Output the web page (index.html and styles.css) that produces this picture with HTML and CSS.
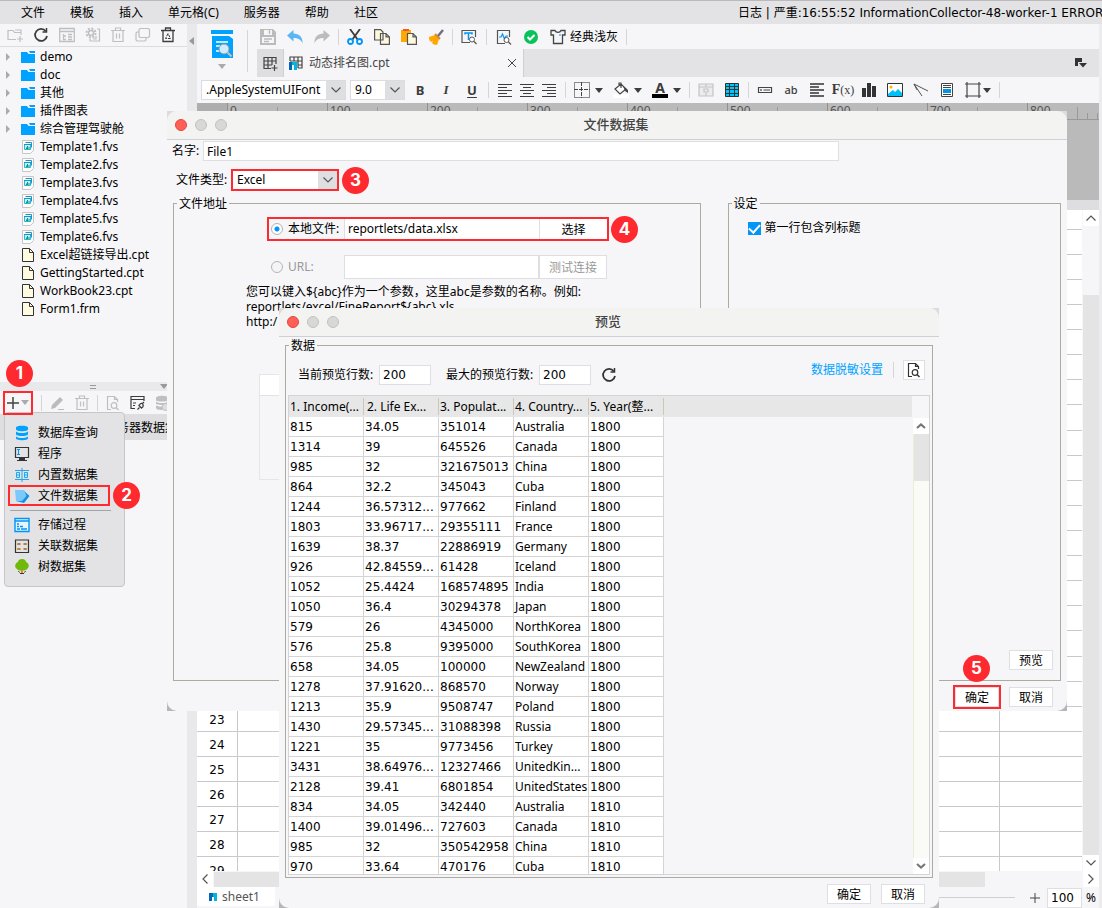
FILE: index.html
```html
<!DOCTYPE html>
<html lang="zh-CN">
<head>
<meta charset="utf-8">
<title>文件数据集</title>
<link rel="stylesheet" href="styles.css">
</head>
<body>
<svg class="sprite" aria-hidden="true">
  <symbol id="i-folder" viewBox="0 0 14 12"><path fill="#00a2ff" d="M0 1h6l1.500 2H14v9H0z"/><path fill="#00a2ff" d="M8 0h6v2H9z"/></symbol>
  <symbol id="i-fvs" viewBox="0 0 12 14"><path fill="#fdfdfe" stroke="#c4c6ca" d="M.5.500h11v10l-3 3h-8z"/><path fill="none" stroke="#1596cc" d="M3.500 2.500h6v5"/><path fill="#c9eefa" stroke="#26b4e0" d="M2.500 4.500h6v5h-6z"/><path stroke="#1596cc" d="M2 4.500h7"/><path stroke="#109c5c" d="M4.500 9V7.500M5.500 9V6M7 9V7"/></symbol>
  <symbol id="i-file" viewBox="0 0 12 14"><path fill="#fffbe0" stroke="#333" d="M.5.500h7l4 4v9H.5z"/><path fill="none" stroke="#333" d="M7.500.500v4h4"/></symbol>
  <symbol id="i-refresh" viewBox="0 0 16 16"><path fill="none" stroke="currentColor" stroke-width="1.800" d="M12.800 4.200A6 6 0 1 0 14 9"/><path fill="none" stroke="currentColor" stroke-width="1.500" d="M13.500 1v4h-4"/></symbol>
  <symbol id="i-trash" viewBox="0 0 14 16"><path fill="none" stroke="currentColor" stroke-width="1.200" d="M0 3.500h14M4.500 3V1h5v2M2 4v10.500h10V4M5.500 6.500v5M8.500 6.500v5"/></symbol>
  <symbol id="i-chev" viewBox="0 0 10 6"><path fill="none" stroke="#555" stroke-width="1.200" d="M.5.500 5 5 9.500.500"/></symbol>
  <symbol id="i-chev-bold" viewBox="0 0 10 6"><path fill="none" stroke="#777" stroke-width="2.200" d="M1 1l4 3.500L9 1"/></symbol>
  <symbol id="i-tri" viewBox="0 0 8 5"><path fill="currentColor" d="M0 0h8L4 5z"/></symbol>
  <symbol id="i-preview" viewBox="0 0 14 16"><path fill="none" stroke="currentColor" stroke-width="1.200" d="M5 14.500H1.500v-13h7l3 3V7M8.500 1.500v3h3"/><circle cx="8" cy="10.500" r="2.800" fill="none" stroke="currentColor" stroke-width="1.200"/><path stroke="currentColor" stroke-width="1.400" d="m10 12.500 2.500 2.500"/></symbol>
  <symbol id="i-left" viewBox="0 0 16 14"><path stroke="currentColor" stroke-width="1.200" d="M1 1.500h14M1 4.500h9M1 7.500h14M1 10.500h9M1 13.500h14"/></symbol>
  <symbol id="i-center" viewBox="0 0 16 14"><path stroke="currentColor" stroke-width="1.200" d="M1 1.500h14M4 4.500h8M1 7.500h14M4 10.500h8M1 13.500h14"/></symbol>
  <symbol id="i-right" viewBox="0 0 16 14"><path stroke="currentColor" stroke-width="1.200" d="M1 1.500h14M6 4.500h9M1 7.500h14M6 10.500h9M1 13.500h14"/></symbol>
  <symbol id="i-undo" viewBox="0 0 16 16"><path fill="currentColor" d="M0 6.500 6.500 1v3.500C12 4.500 16 8 15.500 14.500 14 10.500 11 9 6.500 9v3.500z"/></symbol>
</svg>

<div class="app">
  <header class="menubar">
    <nav class="menus">
      <button>文件</button><button>模板</button><button>插入</button><button>单元格(C)</button><button>服务器</button><button>帮助</button><button>社区</button>
    </nav>
    <p class="log">日志 | 严重:16:55:52 InformationCollector-48-worker-1 ERROR</p>
  </header>

  <div class="workspace">
    <aside class="sidebar">
      <div class="tree-tools">
        <svg width="16" height="16" viewBox="0 0 16 16"><path fill="none" stroke="currentColor" stroke-width="1.200" d="M9 12.500H1v-9h5l1.500 2H14V8M13 9v6M10 12h6M8 3h6v2"/></svg>
        <svg class="dark" width="16" height="16"><use href="#i-refresh"/></svg>
        <svg width="16" height="16" viewBox="0 0 16 16"><path fill="none" stroke="currentColor" stroke-width="1.300" d="M.7 1.500h14.600v13H.7zM.7 4.500h14.600M4.500 7v5.500H7M4.500 9H7M9 7.500h4M9 10h4M9 12.500h4"/></svg>
        <svg width="16" height="16" viewBox="0 0 16 16"><circle cx="6" cy="6" r="2.500" fill="none" stroke="currentColor" stroke-width="1.500"/><circle cx="6" cy="6" r="4.500" fill="none" stroke="currentColor" stroke-width="2" stroke-dasharray="2 1.500"/><path fill="none" stroke="currentColor" stroke-width="1.200" d="M12 2h2.500v12H5v-2M11 9v3H8"/></svg>
        <svg width="14" height="16"><use href="#i-trash"/></svg>
        <svg width="16" height="16" viewBox="0 0 16 16"><path fill="none" stroke="currentColor" stroke-width="1.200" d="M5 1.500h8.500l1 1v7l-1 1H5l-1-1v-7zM4 5H2L1 6v7l1 1h8l1-1v-2.500"/></svg>
        <svg class="dark" width="14" height="16" viewBox="0 0 14 16"><path fill="none" stroke="currentColor" stroke-width="1.300" d="M0 3.500h14M4.500 3V1h5v2M2 4v10.500h10V4"/><path fill="none" stroke="currentColor" d="M7 6.500l-2.500 5h5z" stroke-dasharray="3 1"/></svg>
      </div>
      <ul class="tree">
        <li class="branch"><svg width="14" height="12"><use href="#i-folder"/></svg>demo</li>
        <li class="branch"><svg width="14" height="12"><use href="#i-folder"/></svg>doc</li>
        <li class="branch"><svg width="14" height="12"><use href="#i-folder"/></svg>其他</li>
        <li class="branch"><svg width="14" height="12"><use href="#i-folder"/></svg>插件图表</li>
        <li class="branch"><svg width="14" height="12"><use href="#i-folder"/></svg>综合管理驾驶舱</li>
        <li><svg width="14" height="14"><use href="#i-fvs"/></svg>Template1.fvs</li>
        <li><svg width="14" height="14"><use href="#i-fvs"/></svg>Template2.fvs</li>
        <li><svg width="14" height="14"><use href="#i-fvs"/></svg>Template3.fvs</li>
        <li><svg width="14" height="14"><use href="#i-fvs"/></svg>Template4.fvs</li>
        <li><svg width="14" height="14"><use href="#i-fvs"/></svg>Template5.fvs</li>
        <li><svg width="14" height="14"><use href="#i-fvs"/></svg>Template6.fvs</li>
        <li><svg width="14" height="14"><use href="#i-file"/></svg>Excel超链接导出.cpt</li>
        <li><svg width="14" height="14"><use href="#i-file"/></svg>GettingStarted.cpt</li>
        <li><svg width="14" height="14"><use href="#i-file"/></svg>WorkBook23.cpt</li>
        <li><svg width="14" height="14"><use href="#i-file"/></svg>Form1.frm</li>
      </ul>
      <div class="splitter"><svg width="8" height="4" viewBox="0 0 8 4"><path stroke="#999" d="M1 .5h6M1 3.500h6"/></svg><svg class="fold" width="8" height="5"><use href="#i-tri"/></svg></div>
      <section class="datasets">
        <div class="data-tools">
          <button class="add" aria-label="添加数据集"><svg width="12" height="12" viewBox="0 0 12 12"><path stroke="#444" stroke-width="1.500" d="M6 0v12M0 6h12"/></svg><svg class="muted" width="8" height="5"><use href="#i-tri"/></svg></button>
          <span class="badge badge-one">1</span>
          <i class="sep"></i>
          <svg width="15" height="16" viewBox="0 0 15 16"><path fill="#bbb" d="m2 10 8-8 3 3-8 8-4 1z"/><path stroke="#bbb" d="M8 14.500h6"/></svg>
          <svg width="14" height="16"><use href="#i-trash"/></svg>
          <i class="sep"></i>
          <svg width="14" height="16"><use href="#i-preview"/></svg>
          <svg class="dark" width="15" height="16" viewBox="0 0 15 16"><path fill="none" stroke="currentColor" stroke-width="1.200" d="M5 13.500H1v-12h13V6M1 4.500h13M3 8h3M3 10.500h2"/><path fill="none" stroke="currentColor" stroke-width="1.200" d="M7.500 14.500l2-2M12.500 8.500l1.500-1.500M8.500 10l3.500 3.500M9.500 10c1-2 3-2 3.500-.5s-.5 3-1.500 3.500"/></svg>
          <svg width="14" height="16" viewBox="0 0 14 16"><path fill="currentColor" d="M1 3c0-3 12-3 12 0v2c0 2-12 2-12 0zM1 6.500c2 2 10 2 12 0V9c-2 1-6 1.500-12 0zM1 10.500c2 1 4 1 6 1V15c-4 0-6-1-6-2z"/><circle cx="10.500" cy="12" r="3.500" fill="#ddd" stroke="currentColor"/></svg>
        </div>
        <div class="server-tab">服务器数据集</div>
        <div class="popup">
          <button><svg width="16" height="16" viewBox="0 0 16 16"><g fill="#00a2ff"><path d="M2 2.800C2 .2 14 .2 14 2.800v1.400c0 2.600-12 2.600-12 0z"/><path d="M2 6.500c3 2 9 2 12 0v2.700c0 2.400-12 2.400-12 0z"/><path d="M2 11.500c3 2 9 2 12 0v1.800c0 2.600-12 2.600-12 0z"/></g></svg>数据库查询</button>
          <button><svg width="16" height="16" viewBox="0 0 16 16"><path fill="none" stroke="#333" stroke-width="1.200" d="M1.500 1.500h13v10h-13zM3 14.500h10"/><path fill="#333" d="M5 12h6v2H5z"/><path stroke="#0095f6" d="M3 3.500h3M3 8.500h3M4.500 4v4"/></svg>程序</button>
          <button><svg width="16" height="16" viewBox="0 0 16 16"><path fill="none" stroke="#1ba7f2" d="M1 3.500h14M1 12.500h14M8 1v14M2.500 5.500h3v5h-3zM10.500 5.500h3v5h-3zM2.500 8h3M10.500 8h3"/></svg>内置数据集</button>
          <button class="picked"><svg width="16" height="16" viewBox="0 0 16 16"><path fill="#0c90ea" d="M9 2l6.500 6L10 15l-8-2z"/><path fill="#7cc8fb" d="M1 2l9 0 2.500 6L8 13l-6 0z"/></svg>文件数据集</button>
          <span class="badge badge-two">2</span>
          <hr>
          <button><svg width="16" height="16" viewBox="0 0 16 16"><path fill="#e6f5ff" stroke="#0095f6" stroke-width="1.400" d="M1 1.500h14v13H1z"/><path fill="none" stroke="#0095f6" stroke-width="1.500" d="M1 4h14M3 7h2M3 9.500h2M6 9.500h3M3 12h3M7 12h6"/></svg>存储过程</button>
          <button><svg width="16" height="16" viewBox="0 0 16 16"><path fill="none" stroke="#333" stroke-width="1.200" d="M1.500 2h13v12.500h-13zM3 6h3M10 6h3M3 11h3M10 11h3"/><path stroke="#ff9800" stroke-width="1.500" d="M6 6h1M9 6h1M3 11h1.500M6 11h1M9 11h1M12 11h1M3 6h1M12 6h1"/></svg>关联数据集</button>
          <button><svg width="16" height="16" viewBox="0 0 16 16"><path fill="#6fba08" d="M8 0c3 0 4 2 4 3 3 1 4 5 1 7-1 2-9 2-10 0C0 8 1 4 4 3c0-2 2-3 4-3z"/><path stroke="#e08a1e" stroke-width="2" d="M8 11v4"/><path fill="none" stroke="#333" d="M4.500 12l1 1.500M11.500 12l-1 1.500M6 14.500h4"/></svg>树数据集</button>
        </div>
      </section>
    </aside>
    <div class="divider"><svg width="5" height="8" viewBox="0 0 5 8"><path fill="#999" d="M5 0v8L0 4z"/></svg></div>

    <main class="editor">
      <div class="top">
        <button class="preview-main" aria-label="预览模板"><svg width="22" height="28" viewBox="0 0 22 28"><path fill="#00a2ff" d="M0 0h22v4H0zM1 6h17l4 3v19H1z"/><path stroke="#fff" stroke-width="1.500" d="M5 12h12M5 16h4M5 21h4"/><circle cx="13" cy="19" r="5" fill="#ccecff" stroke="#9a9a9a"/><path stroke="#c9c0b8" stroke-width="2" d="m16.500 22.500 4 4"/></svg><svg class="muted" width="8" height="5"><use href="#i-tri"/></svg></button>
        <div class="top-right">
          <div class="main-tools">
            <svg width="16" height="16" viewBox="0 0 16 16"><path fill="#bbb" d="M0 0h13l3 3v13H0z"/><path fill="#f6f6f8" d="M4 1h8v5H4zM2 8h12v6H2z"/><path stroke="#bbb" stroke-width="1.500" d="M9.500 1v4M4 10h8M4 12.500h5"/></svg>
            <svg class="blue" width="16" height="16"><use href="#i-undo"/></svg>
            <svg class="flip" width="16" height="16"><use href="#i-undo"/></svg>
            <i class="sep"></i>
            <svg width="16" height="16" viewBox="0 0 16 16"><path stroke="#3c3c3c" stroke-width="1.800" d="m3 0 8 11M13 0 5 11"/><g fill="none" stroke="#0095f6" stroke-width="1.800"><circle cx="3.500" cy="12.500" r="2.500"/><circle cx="12.500" cy="12.500" r="2.500"/></g></svg>
            <svg width="16" height="16" viewBox="0 0 16 16"><path fill="#fff8e0" stroke="#555" stroke-width="1.200" d="M.6.600h6L9 3v8H.6zM6.500 4.500h5.500l3.400 3.400v7.500H6.500zM12 4.500v3.400h3"/></svg>
            <svg width="16" height="16" viewBox="0 0 16 16"><path fill="#ffa800" d="M0 1h10v12H0z"/><path stroke="#f05a28" stroke-width="2" d="M2 1h6"/><path fill="#fff8e0" stroke="#555" stroke-width="1.200" d="M6.500 4.500h5.500l3.400 3.400v7.500H6.500zM12 4.500v3.400h3"/></svg>
            <svg width="16" height="16" viewBox="0 0 16 16"><path fill="#ffa800" d="m1 8 6-2 4 4-2 6C6 16 5 15 4 14l1-2-2 1C1 11 1 10 1 8z"/><path stroke="#e8821e" stroke-width="2" d="m7 5 5 5"/><path stroke="#6b7286" stroke-width="2.500" d="m10 7 5-6"/></svg>
            <i class="sep"></i>
            <svg width="16" height="16" viewBox="0 0 16 16"><path fill="none" stroke="#555" stroke-width="1.200" d="M9 13.500H1v-12h13.500V8"/><path fill="none" stroke="#0095f6" stroke-width="1.500" d="M4 5.500V4h7v1.500M7.500 4v7"/><circle cx="11" cy="10.500" r="2.500" fill="#fff" stroke="#555"/><path stroke="#555" stroke-width="1.300" d="m13 12.500 2.500 2.500"/></svg>
            <i class="sep wide"></i>
            <svg width="16" height="16" viewBox="0 0 16 16"><path fill="none" stroke="#555" stroke-width="1.200" d="M9 14.500H1.500v-13h12V8"/><path fill="none" stroke="#0095f6" stroke-width="1.200" d="M3 8h2l1.500-3 2 5 1.500-3h2"/><circle cx="10.500" cy="11" r="2.500" fill="#fff" stroke="#555"/><path stroke="#555" stroke-width="1.300" d="m12.500 13 2.500 2.500"/></svg>
            <svg width="16" height="16" viewBox="0 0 16 16"><circle cx="8" cy="8" r="7" fill="#08c25c"/><path fill="none" stroke="#fff" stroke-width="2" d="m4.500 8 2.500 2.500 4.500-4.500"/></svg>
            <button class="theme"><svg width="16" height="16" viewBox="0 0 16 16"><path fill="none" stroke="#444" stroke-width="1.300" d="M5 1.500H1V6h2.500v8.500h9V6H15V1.500h-4C10 4 6 4 5 1.500z"/><path stroke="#0095f6" d="M9 6h2"/></svg>经典浅灰</button>
            <i class="sep"></i>
          </div>
          <div class="tabs">
            <button class="new-tab" aria-label="新建"><svg width="15" height="15" viewBox="0 0 15 15"><path fill="none" stroke="#444" stroke-width="1.200" d="M8 12.500H1v-11h12V8M1 5h12M1 9h8M5 1.500v11M9 1.500V9M11.500 9v6M8.500 12h6"/></svg></button>
            <div class="tab"><svg width="14" height="14" viewBox="0 0 14 14"><path fill="none" stroke="#444" stroke-width="1.200" d="M1 5V1h12v11H9M1 5h12M5 1v4M9 1v11M9 9h4"/><path fill="#0068b7" d="M0 6h3v8H0z"/><path fill="#00b5e2" d="M3 6h5v8H5V9H3z"/></svg><span>动态排名图.cpt</span><button class="close" aria-label="关闭"><svg width="8" height="8" viewBox="0 0 8 8"><path stroke="#444" d="m0 0 8 8M8 0 0 8"/></svg></button></div>
            <svg class="tab-menu" width="12" height="10" viewBox="0 0 12 10"><path fill="#333" d="M0 0h7v4H3v4H0z"/><path fill="#333" d="M4 5h8L8 9.500z"/></svg>
          </div>
        </div>
      </div>

      <div class="format">
        <div class="combo combo-font"><select aria-label="字体"><option>.AppleSystemUIFont</option></select><svg width="10" height="6"><use href="#i-chev"/></svg></div>
        <div class="combo combo-size"><select aria-label="字号"><option>9.0</option></select><svg width="10" height="6"><use href="#i-chev"/></svg></div>
        <div class="format-icons">
          <button class="letter">B</button><button class="letter italic">I</button><button class="letter under">U</button>
          <i class="sep"></i>
          <span class="aligns"><svg width="16" height="14"><use href="#i-left"/></svg><svg width="16" height="14"><use href="#i-center"/></svg><svg width="16" height="14"><use href="#i-right"/></svg></span>
          <i class="sep"></i>
          <span class="drop"><svg width="16" height="16" viewBox="0 0 16 16"><path fill="none" stroke="#222" stroke-dasharray="1 1" d="M.5.500h15v15H.5z"/><path stroke="#444" stroke-dasharray="4 1" d="M0 7.500h16M7.500 0v16"/></svg><svg width="8" height="5"><use href="#i-tri"/></svg></span>
          <span class="drop"><svg width="16" height="16" viewBox="0 0 16 16"><path fill="#fff" d="M0 12h16v4H0z"/><path fill="#fff" stroke="#444" stroke-width="1.200" d="m2 7 6-5 5 5-6 5zM6 4V1h2v5"/><path fill="#444" d="m10 4 5 4v3l-3-2z"/></svg><svg width="8" height="5"><use href="#i-tri"/></svg></span>
          <span class="drop"><button class="letter colour">A</button><svg width="8" height="5"><use href="#i-tri"/></svg></span>
          <i class="sep"></i>
          <svg class="pale" width="16" height="14" viewBox="0 0 16 14"><path fill="#ececee" stroke="currentColor" stroke-width="1.200" d="M1 1h14v12H1zM1 4h14M8 1v3M8 10v3M6 6h4v3H6z"/></svg>
          <svg width="16" height="14" viewBox="0 0 16 14"><path fill="#00c8ff" stroke="#333" d="M1.500.500h13v13h-13z"/><path fill="none" stroke="#333" d="M1 3.500h14M1 6.500h14M1 10.500h14M5.500 1v12M10.500 1v12"/></svg>
          <i class="sep"></i>
          <svg width="16" height="16" viewBox="0 0 16 16"><path fill="none" stroke="#444" stroke-width="1.200" d="M1.500 5.500h13v5h-13zM4 7v2M6.500 8H13"/></svg>
          <span class="glyph">ab</span>
          <svg width="16" height="14" viewBox="0 0 16 14"><path stroke="#333" stroke-width="1.600" d="M1 1h14M1 4h9M1 7h14M1 10h9M1 13h14"/></svg>
          <span class="glyph fx"><b>F</b>(x)</span>
          <svg width="16" height="14" viewBox="0 0 16 14"><path fill="#333" d="M1 5h4v9H1zM6 0h4v14H6zM11 3h4v11h-4z"/></svg>
          <svg width="16" height="14" viewBox="0 0 16 14"><path fill="#fff" stroke="#333" d="M.5.500h15v13H.5z"/><path fill="#00c0f8" d="M1 11l5-4 2 2 3-3 4 4v3H1z"/><circle cx="4" cy="4" r="1.500" fill="#ffb400"/></svg>
          <svg width="16" height="14" viewBox="0 0 16 14"><path fill="none" stroke="#555" d="M15 8 1 1l8 12M1 1l3 6"/></svg>
          <svg width="16" height="14" viewBox="0 0 16 14"><path fill="#fff" stroke="#444" d="M2.500.500h11v13h-11z"/><path stroke="#444" d="M4 2.500h8M4 4.500h8M4 11.500h8"/><path fill="#0095e6" d="M4 6h8v4H4z"/></svg>
          <span class="drop tight"><svg width="16" height="16" viewBox="0 0 16 16"><path fill="none" stroke="#444" stroke-width="1.200" d="M2 0v16M14 0v16M0 2h16M0 14h16"/></svg><svg width="8" height="5"><use href="#i-tri"/></svg></span>
          <i class="sep"></i>
        </div>
      </div>

      <div class="ruler"><i></i><span>0</span><span>100</span><span>200</span><span>300</span><span>400</span><span>500</span><span>600</span><span>700</span><span>800</span></div>
      <div class="canvas"></div>
      <div class="col-head"></div>
      <div class="sheet">
        <table>
          <colgroup><col class="num"><col><col class="last"></colgroup>
          <tr><th></th><td></td><td></td></tr><tr><th></th><td></td><td></td></tr><tr><th></th><td></td><td></td></tr><tr><th></th><td></td><td></td></tr>
          <tr><th></th><td></td><td></td></tr><tr><th></th><td></td><td></td></tr><tr><th></th><td></td><td></td></tr><tr><th></th><td></td><td></td></tr>
          <tr><th></th><td></td><td></td></tr><tr><th></th><td></td><td></td></tr><tr><th></th><td></td><td></td></tr><tr><th></th><td></td><td></td></tr>
          <tr><th></th><td></td><td></td></tr><tr><th></th><td></td><td></td></tr><tr><th></th><td></td><td></td></tr><tr><th></th><td></td><td></td></tr>
          <tr><th></th><td></td><td></td></tr><tr><th></th><td></td><td></td></tr><tr><th></th><td></td><td></td></tr><tr><th></th><td></td><td></td></tr>
          <tr><th>23</th><td></td><td></td></tr>
          <tr><th>24</th><td></td><td></td></tr>
          <tr><th>25</th><td></td><td></td></tr>
          <tr><th>26</th><td></td><td></td></tr>
          <tr><th>27</th><td></td><td></td></tr>
          <tr><th>28</th><td></td><td></td></tr>
          <tr><th>29</th><td></td><td></td></tr>
        </table>
        <div class="vscroll"><span class="sb"><svg width="10" height="6" class="up"><use href="#i-chev"/></svg></span><span class="rail"><i></i></span><span class="sb"><svg width="10" height="6"><use href="#i-chev"/></svg></span></div>
      </div>
      <div class="hscroll"><span class="sb"><svg width="6" height="10" viewBox="0 0 6 10"><path fill="none" stroke="#555" stroke-width="1.200" d="M5.500.500 1 5l4.500 4.500"/></svg></span><i></i><span class="sb"><svg width="6" height="10" viewBox="0 0 6 10"><path fill="none" stroke="#555" stroke-width="1.200" d="M.5.500 5 5 .5 9.500"/></svg></span></div>
      <footer class="status">
        <button class="sheet-tab"><svg width="8" height="8" viewBox="0 0 8 8"><path fill="#0068b7" d="M0 0h4v4H3v4H0z"/><path fill="#00b5e2" d="M4 0h4v8H5V4H4z"/></svg>sheet1</button>
        <i class="zoom-line"></i>
        <svg width="10" height="10" viewBox="0 0 10 10"><path stroke="#444" d="M5 0v10M0 5h10"/></svg>
        <input class="field zoom-value" aria-label="缩放" value="100"><span>%</span>
      </footer>
    </main>
    <div class="edge"></div>
  </div>
</div>

<section class="window file-window">
  <div class="pane">
    <div class="title"><i class="light red"></i><i class="light"></i><i class="light"></i><h1>文件数据集</h1></div>
    <div class="name-row"><label for="name">名字:</label><input class="field" id="name" value="File1"></div>
    <div class="type-row"><label for="type">文件类型:</label>
      <div class="combo combo-type marked"><select id="type"><option>Excel</option></select><svg width="10" height="6"><use href="#i-chev"/></svg><span class="badge badge-three">3</span></div></div>
    <div class="panels">
      <fieldset class="address"><legend>文件地址</legend>
        <div class="source marked"><label><input type="radio" name="src" checked>本地文件:</label><input class="field" aria-label="路径" value="reportlets/data.xlsx"><button class="btn">选择</button><span class="badge badge-four">4</span></div>
        <div class="source off"><label><input type="radio" name="src" disabled>URL:</label><input class="field" aria-label="URL" disabled><button class="btn" disabled>测试连接</button></div>
        <p class="hint">您可以键入${abc}作为一个参数，这里abc是参数的名称。例如:<br>reportlets/excel/FineReport${abc}.xls<br>http:/</p>
        <div class="params"></div>
      </fieldset>
      <fieldset class="settings"><legend>设定</legend>
        <label class="check"><input type="checkbox" checked>第一行包含列标题</label>
        <button class="btn">预览</button>
      </fieldset>
    </div>
    <div class="actions"><span class="marked ok"><button class="btn">确定</button><span class="badge badge-five">5</span></span><button class="btn">取消</button></div>
  </div>
</section>

<section class="window preview-window">
  <div class="pane">
    <div class="title"><i class="light red"></i><i class="light"></i><i class="light"></i><h1>预览</h1></div>
    <fieldset class="data"><legend>数据</legend>
      <div class="data-bar">
        <div class="counts"><label for="now">当前预览行数:</label><input class="field" id="now" value="200"><label class="second" for="max">最大的预览行数:</label><input class="field" id="max" value="200"><svg width="16" height="16"><use href="#i-refresh"/></svg></div>
        <div class="links"><a href="#">数据脱敏设置</a><i class="sep"></i><button class="btn icon-btn" aria-label="预览"><svg width="14" height="16"><use href="#i-preview"/></svg></button></div>
      </div>
      <div class="grid-box">
        <div class="grid-scroll">
        <table class="grid">
          <colgroup><col><col><col><col><col><col class="rest"></colgroup>
          <thead><tr><th>1. Income(...</th><th>2. Life Ex...</th><th>3. Populat...</th><th>4. Country...</th><th>5. Year(整...</th><th></th></tr></thead>
          <tbody>
          <tr><td>815</td><td>34.05</td><td>351014</td><td>Australia</td><td>1800</td></tr>
          <tr><td>1314</td><td>39</td><td>645526</td><td>Canada</td><td>1800</td></tr>
          <tr><td>985</td><td>32</td><td>321675013</td><td>China</td><td>1800</td></tr>
          <tr><td>864</td><td>32.2</td><td>345043</td><td>Cuba</td><td>1800</td></tr>
          <tr><td>1244</td><td>36.57312...</td><td>977662</td><td>Finland</td><td>1800</td></tr>
          <tr><td>1803</td><td>33.96717...</td><td>29355111</td><td>France</td><td>1800</td></tr>
          <tr><td>1639</td><td>38.37</td><td>22886919</td><td>Germany</td><td>1800</td></tr>
          <tr><td>926</td><td>42.84559...</td><td>61428</td><td>Iceland</td><td>1800</td></tr>
          <tr><td>1052</td><td>25.4424</td><td>168574895</td><td>India</td><td>1800</td></tr>
          <tr><td>1050</td><td>36.4</td><td>30294378</td><td>Japan</td><td>1800</td></tr>
          <tr><td>579</td><td>26</td><td>4345000</td><td>NorthKorea</td><td>1800</td></tr>
          <tr><td>576</td><td>25.8</td><td>9395000</td><td>SouthKorea</td><td>1800</td></tr>
          <tr><td>658</td><td>34.05</td><td>100000</td><td>NewZealand</td><td>1800</td></tr>
          <tr><td>1278</td><td>37.91620...</td><td>868570</td><td>Norway</td><td>1800</td></tr>
          <tr><td>1213</td><td>35.9</td><td>9508747</td><td>Poland</td><td>1800</td></tr>
          <tr><td>1430</td><td>29.57345...</td><td>31088398</td><td>Russia</td><td>1800</td></tr>
          <tr><td>1221</td><td>35</td><td>9773456</td><td>Turkey</td><td>1800</td></tr>
          <tr><td>3431</td><td>38.64976...</td><td>12327466</td><td>UnitedKin...</td><td>1800</td></tr>
          <tr><td>2128</td><td>39.41</td><td>6801854</td><td>UnitedStates</td><td>1800</td></tr>
          <tr><td>834</td><td>34.05</td><td>342440</td><td>Australia</td><td>1810</td></tr>
          <tr><td>1400</td><td>39.01496...</td><td>727603</td><td>Canada</td><td>1810</td></tr>
          <tr><td>985</td><td>32</td><td>350542958</td><td>China</td><td>1810</td></tr>
          <tr><td>970</td><td>33.64</td><td>470176</td><td>Cuba</td><td>1810</td></tr>
          </tbody>
        </table>
        </div>
        <div class="vscroll"><span class="sb"><svg width="10" height="6" class="up"><use href="#i-chev-bold"/></svg></span><span class="rail"><i></i></span><span class="sb"><svg width="10" height="6"><use href="#i-chev-bold"/></svg></span></div>
      </div>
    </fieldset>
    <div class="actions"><button class="btn">确定</button><button class="btn">取消</button></div>
  </div>
</section>
</body>
</html>
```
FILE: styles.css
```css
* { box-sizing: border-box; }
body {
  margin: 0;
  height: 100vh;
  overflow: hidden;
  background: #f6f6f8;
  color: #000;
  font: 12px/16px "Noto Sans", "Noto Sans CJK SC", sans-serif;
}
button, input, select { font: inherit; color: inherit; margin: 0; }
button { border: 0; padding: 0; background: none; }
svg { display: block; flex: none; }
i { flex: none; }
.sprite { display: none; }
.muted { color: #aaa; }
.app { height: 100%; display: flex; flex-direction: column; }

/* menu bar */
.menubar {
  flex: none;
  height: 24px;
  display: flex;
  align-items: center;
  justify-content: space-between;
  padding-left: 21px;
  overflow: hidden;
  background: #e3e3e5;
  border-top: 1px solid #bababd;
}
.menus { display: flex; gap: 25px; }
.log { flex: none; width: 364px; margin: 0; white-space: nowrap; font-family: "DejaVu Sans", "Noto Sans CJK SC", sans-serif; }

.workspace { flex: 1; min-height: 0; display: flex; }
.sep { width: 1px; height: 16px; background: #d6d6d9; }

/* sidebar */
.sidebar { flex: none; width: 187px; display: flex; flex-direction: column; }
.tree-tools {
  height: 23px;
  display: flex;
  align-items: center;
  gap: 10px;
  padding-left: 7px;
  color: #bfbfc2;
  border-bottom: 1px solid #dcdcdf;
}
.dark { color: #3c3c3c; }
.tree { list-style: none; margin: 0; padding: 1px 0 0; height: 335px; }
.tree li { height: 18px; display: flex; align-items: center; gap: 5px; padding-left: 21px; }
.tree .branch { padding-left: 6px; gap: 5px; }
.tree .branch::before {
  content: "";
  margin-right: 6px;
  border-left: 4px solid #aaa;
  border-top: 4px solid transparent;
  border-bottom: 4px solid transparent;
}
.splitter {
  width: 168px;
  height: 9px;
  display: flex;
  align-items: center;
  justify-content: space-between;
  padding-left: 89px;
  background: #e9e9eb;
  color: #999;
}
.datasets { position: relative; flex: 1; }
.data-tools { height: 23px; display: flex; align-items: center; gap: 10px; padding-left: 3px; color: #bfbfc2; }
.add {
  position: relative;
  z-index: 1;
  width: 30px;
  height: 24px;
  display: flex;
  align-items: center;
  justify-content: center;
  gap: 2px;
  border: 2px solid #fe2a2f;
}
.data-tools .sep { margin: 0 -2px; }
.server-tab { height: 26px; padding: 6px 0 0 105px; line-height: 16px; background: #dedee0; }
.popup {
  position: absolute;
  left: 4px;
  top: 21px;
  width: 121px;
  padding: 9px 0 9px 3px;
  background: #e3e3e5;
  border: 1px solid #c6c6ca;
  border-radius: 4px;
}
.popup button {
  width: 102px;
  height: 21px;
  display: flex;
  align-items: center;
  gap: 8px;
  padding-left: 6px;
  white-space: nowrap;
}
.popup .picked { outline: 2px solid #fe2a2f; outline-offset: -2px; }
.popup hr { width: 101px; margin: 4px 0 3px 2px; border: 0; border-top: 1px solid #a4a4a7; }

/* numbered callouts */
.badge {
  position: absolute;
  width: 27px;
  height: 27px;
  border-radius: 50%;
  background: #fe2a2f;
  color: #fff;
  font: bold 17px/27px Inter, "Liberation Sans", sans-serif;
  text-align: center;
}
.badge-one { left: 6px; top: -31px; }
.badge-two { left: 108px; top: 69px; }
.badge-three { left: 109px; top: -4px; }
.badge-four { left: 342px; top: -3px; }
.badge-five { left: 8px; top: -32px; }
.marked { position: relative; border: 2px solid #fe2a2f; }

.divider { flex: none; width: 10px; padding: 13px 0 0 2px; background: #e9e9eb; }
.edge { flex: none; width: 3px; background: #ececee; }

/* editor */
.editor { flex: 1; min-width: 0; display: flex; flex-direction: column; }
.top { flex: none; height: 53px; display: flex; }
.preview-main {
  width: 51px;
  margin: 6px 0 5px;
  display: flex;
  flex-direction: column;
  align-items: center;
  gap: 6px;
  border-right: 1px solid #d6d6d9;
}
.top-right { flex: 1; min-width: 0; }
.main-tools { height: 25px; display: flex; align-items: center; gap: 11px; padding-left: 12px; color: #bbb; }
.main-tools .sep { margin: 0 -3px; }
.main-tools .wide { margin: 0 -2px; }
.blue { color: #5cb6f2; }
.flip { transform: scaleX(-1); }
.theme { display: flex; align-items: center; gap: 4px; color: #000; }
.tabs { height: 28px; margin-left: 9px; display: flex; align-items: stretch; background: #e3e3e5; }
.new-tab { width: 27px; display: grid; place-items: center; border-right: 1px solid #cfcfd2; background: #dedee0; }
.tab {
  width: 240px;
  display: flex;
  align-items: center;
  gap: 6px;
  padding: 0 7px 0 5px;
  color: #444;
  background: #f6f6f8;
  border-right: 1px solid #cfcfd2;
}
.close { margin-left: auto; }
.tab-menu { margin: auto 12px auto auto; }

.format { flex: none; height: 26px; display: flex; align-items: center; padding-left: 4px; color: #3c3c3c; }
.combo { display: grid; grid-template-columns: 1fr 19px; background: #dedfe1; border: 1px solid #dcdcdf; height: 20px; color: #000; }
.combo select {
  grid-area: 1 / 1 / 2 / 3;
  appearance: none;
  border: 0;
  border-radius: 0;
  padding: 0 0 0 4px;
  background: linear-gradient(#fff, #fff) left / calc(100% - 19px) 100% no-repeat;
}
.combo > svg { grid-area: 1 / 2; place-self: center; pointer-events: none; }
.combo-font { width: 145px; }
.combo-size { width: 55px; margin-left: 4px; }
.format-icons { display: flex; align-items: center; gap: 10px; margin-left: 7px; }
.format-icons .sep { margin: 0 -2px; }
.letter { width: 16px; height: 16px; font: bold 13px/16px "Noto Sans", sans-serif; text-align: center; }
.italic { font-family: "Liberation Serif", serif; font-style: italic; }
.under { text-decoration: underline; text-underline-offset: 2px; }
.colour { font-size: 14px; line-height: 12px; border-bottom: 4px solid #000; }
.aligns { display: flex; gap: 6px; }
.drop { display: flex; align-items: center; gap: 5px; }
.tight { gap: 2px; }
.pale { color: #c4c4c7; }
.glyph { width: 16px; text-align: center; white-space: nowrap; font-size: 11px; font-weight: 500; }
.fx { font-family: "Liberation Serif", serif; font-size: 12px; display: flex; justify-content: center; }
.fx b { font-size: 14px; }

.ruler { flex: none; height: 17px; display: flex; overflow: hidden; background: #bababa; border-bottom: 1px solid #999; color: #555; }
.ruler i { width: 30px; background: #aeaeae; }
.ruler span {
  flex: none;
  width: 100px;
  padding-left: 2px;
  line-height: 16px;
  border-left: 1px solid #909090;
  background: linear-gradient(#999, #999) 49px 100% / 1px 12px no-repeat;
}
.ruler span:last-child { background: linear-gradient(#999, #999) 49px 100% / 1px 12px no-repeat, linear-gradient(#999, #999) 59px 100% / 1px 6px no-repeat, linear-gradient(#999, #999) 69px 100% / 1px 6px no-repeat; }
.canvas { flex: none; height: 80px; background: #bababa; }
.col-head { flex: none; height: 10px; background: #dedee0; }
.sheet { flex: 1; min-height: 0; display: flex; align-items: stretch; overflow: hidden; }
.sheet table { flex: 1; align-self: flex-start; table-layout: fixed; border-spacing: 0; background: #fff; }
.sheet .num { width: 41px; }
.sheet .last { width: 82px; }
.sheet th, .sheet td { height: 25px; padding: 0; border-bottom: 1px solid #c9c9cb; border-right: 1px solid #c9c9cb; }
.sheet td:last-child { border-right: 0; }
.sheet th { padding-top: 2px; font: 12px/16px "DejaVu Sans", sans-serif; }
.sheet tr:first-child > * { height: 20px; }
.sheet tr:nth-child(9n) > * { height: 26px; }
.vscroll { flex: none; width: 17px; display: flex; flex-direction: column; padding-left: 1px; }
.sb { flex: none; width: 16px; height: 16px; display: grid; place-items: center; background: #fff; }
.up { transform: scaleY(-1); }
.rail { flex: 1; }
.rail i { display: block; background: #e4e4e4; }
.sheet .rail { padding-top: 69px; display: flex; }
.sheet .rail i { flex: 1; }
.hscroll { flex: none; height: 16px; display: flex; justify-content: space-between; align-items: center; }
.hscroll i { flex: 0 1 771px; height: 15px; margin: 0 auto 0 1px; background: #e4e4e4; }
.status { flex: none; height: 21px; display: flex; align-items: center; padding-right: 3px; }
.sheet-tab { align-self: flex-start; width: 78px; height: 19px; display: flex; align-items: center; gap: 5px; padding-left: 12px; background: #fff; color: #555; }
.zoom-line { width: 300px; height: 1px; margin: 0 15px 0 auto; background: #d0d0d3; }
.field { min-width: 0; height: 20px; padding: 0 4px; background: #fff; border: 1px solid #dedfe2; border-radius: 0; }
.zoom-value { width: 35px; margin: 0 4px 0 7px; padding: 0 3px; font: 12px "DejaVu Sans", sans-serif; }

/* windows */
.window { position: absolute; background: linear-gradient(#dcdcde, #b6b6b8); }
.file-window { left: 167px; top: 111px; width: 900px; height: 600px; }
.preview-window { left: 279px; top: 308px; width: 660px; height: 600px; }
.pane { height: 100%; display: flex; flex-direction: column; overflow: hidden; background: #f6f6f8; border-radius: 10px; }
.title { flex: none; height: 29px; display: flex; align-items: center; gap: 8px; padding: 0 8px; background: #f3f3f1; border-bottom: 1px solid #d0d0d2; }
.title h1 { flex: 1; margin: 0 62px 2px 0; font-size: 13px; font-weight: 500; line-height: 16px; color: #444; text-align: center; }
.light { width: 12px; height: 12px; border-radius: 50%; background: #d8d8d7; border: 1px solid #c2c2c1; }
.light.red { background: #ff5f57; border-color: #e2463f; }
.btn { height: 20px; width: 44px; padding-top: 2px; line-height: 16px; background: #fff; border: 1px solid #dedfe2; white-space: nowrap; }
.name-row { display: flex; align-items: center; padding: 1px 228px 0 5px; }
.name-row label { flex: none; width: 31px; }
.name-row .field { flex: 1; padding-left: 3px; }
.type-row { display: flex; align-items: center; margin: 8px 0 4px; padding-left: 9px; }
.type-row label { width: 55px; }
.combo-type { width: 108px; height: 22px; border: 2px solid #fe2a2f; }
.panels { flex: 1; min-height: 0; display: flex; gap: 27px; padding: 0 6px; }
fieldset { min-width: 0; margin: 0; padding: 0; display: flex; flex-direction: column; border: 1px solid #abab9f; }
legend { margin-left: 3px; padding: 0 2px; height: 16px; line-height: 18px; }
.address { flex: 528 1 0; }
.settings { flex: 333 1 0; }
.source { display: grid; grid-template-columns: 75px 195px 68px; align-items: stretch; width: 342px; height: 24px; margin: 6px 0 0 93px; }
.source label { display: flex; align-items: center; gap: 5px; padding-left: 2px; white-space: nowrap; }
.source .field, .source .btn { width: auto; height: auto; }
.source .field { padding-left: 3px; }
.source.marked .field, .source.marked .btn { border-width: 0 0 0 1px; }
.source.off { margin-top: 14px; padding: 0 2px; color: #999; }
.source .field:disabled, .source .btn:disabled { background: #fff; }
input[type="radio"] { appearance: none; width: 12px; height: 12px; border: 1px solid #b4b4b8; border-radius: 50%; background: #f4f4f6; }
input[type="radio"]:checked { background: radial-gradient(circle, #0095f6 0 2px, #fff 3px); }
.hint { margin: 5px 0 0 72px; line-height: 15px; }
.params { margin: 45px 40px 0 85px; height: 106px; background: linear-gradient(#fff 0 20px, #e2e2e4 20px 21px, transparent 21px); border: 1px solid #e6e6e8; }
.check { display: flex; align-items: center; gap: 4px; margin: 9px 0 0 19px; }
input[type="checkbox"] { appearance: none; display: grid; place-items: center; width: 13px; height: 13px; background: #0095f6; }
input[type="checkbox"]::after { content: ""; width: 9px; height: 5px; border: solid #fff; border-width: 0 0 2px 2px; transform: translateY(-1px) rotate(-48deg); }
.settings .btn { margin: auto 7px 10px auto; }
.actions { flex: none; height: 30px; display: flex; justify-content: flex-end; align-items: center; gap: 10px; padding: 2px 14px 0; }
.ok { margin-right: -2px; }
.ok .btn { display: block; }

/* preview window */
.data { flex: 1; min-height: 0; margin: 0 6px; }
.data-bar { flex: none; display: flex; justify-content: space-between; align-items: flex-start; height: 42px; padding: 7px 7px 0 12px; }
.counts, .links { display: flex; align-items: center; }
.counts { padding-top: 5px; color: #333; }
.counts label { width: 81px; color: #000; }
.counts .second { width: 93px; margin-left: 15px; }
.counts .field { width: 52px; padding-left: 3px; font-family: "DejaVu Sans", sans-serif; color: #000; }
.counts svg { margin-left: 10px; }
.links a { color: #00a2ff; text-decoration: none; }
.links .sep { margin: 0 9px 0 10px; }
.icon-btn { width: 22px; padding: 0; display: grid; place-items: center; color: #333; }
.grid-box { flex: 1; min-height: 0; display: flex; margin: 0 2px 2px; overflow: hidden; border: 1px solid #d4d4d8; }
.grid-scroll { flex: 1; min-width: 0; overflow: hidden; }
.grid { width: 100%; table-layout: fixed; border-spacing: 0; text-align: left; }
.grid col { width: 75px; }
.grid col.rest { width: auto; }
.grid th { height: 21px; padding: 0 0 0 1px; font-weight: 400; white-space: nowrap; background: #e7e7e7; }
.grid th:nth-child(2) { padding-left: 3px; }
.grid th:not(:last-child) { background: linear-gradient(#c8c8bc, #c8c8bc) right / 1px 17px no-repeat #e7e7e7; }
.grid td { height: 20px; padding: 0 0 0 1px; line-height: 16px; font-family: "DejaVu Sans", sans-serif; white-space: nowrap; background: #fff; border-right: 1px solid #d4d4d4; border-bottom: 1px solid #d4d4d4; }
.grid td:nth-child(4) { font-family: "Noto Sans", sans-serif; }
.grid-box .vscroll { padding-top: 22px; }
.grid-box .rail { background: #fafaf7; border-left: 1px solid #eeecd8; }
.grid-box .rail i { height: 47px; }
```
